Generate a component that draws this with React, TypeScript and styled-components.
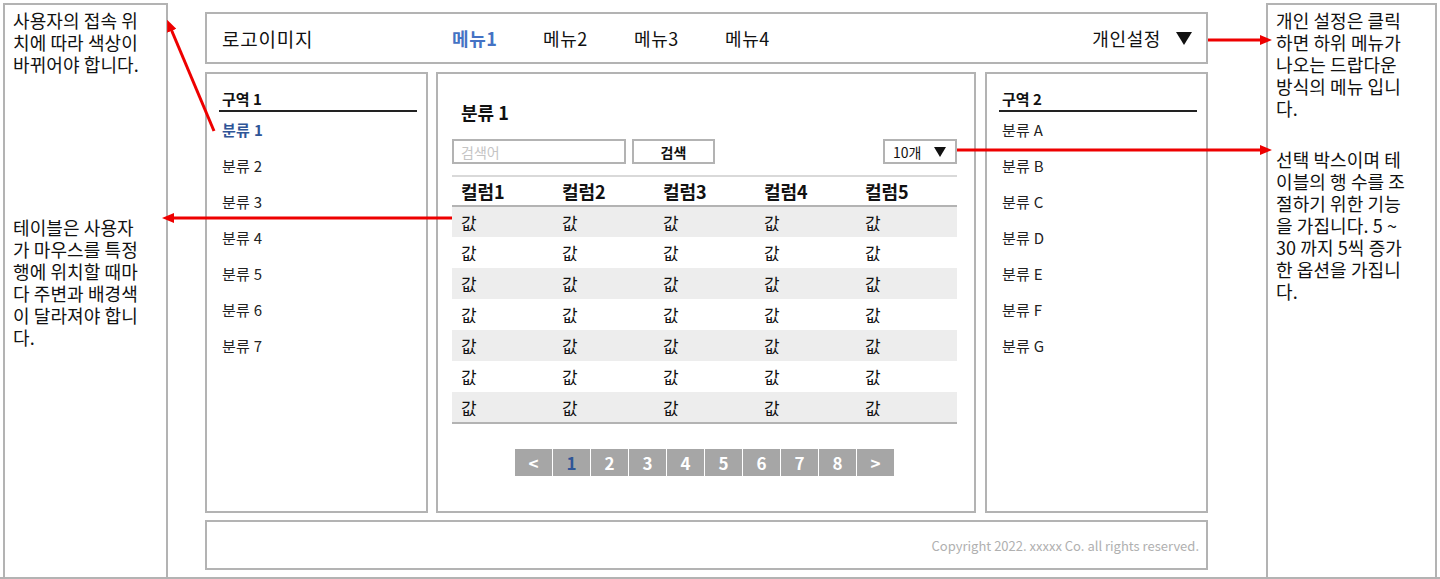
import styled, { createGlobalStyle } from "styled-components";

const GlobalStyle = createGlobalStyle`
  html, body {
    margin: 0;
    padding: 0;
    background: #ffffff;
  }
  body {
    font-family: "Noto Sans CJK KR", "Noto Sans", sans-serif;
    color: #111;
  }
  * {
    box-sizing: border-box;
  }
`;

const GRAY = "#b3b3b3";
const RED = "#ee0000";

const Canvas = styled.div`
  position: relative;
  width: 1440px;
  height: 579px;
  display: flex;
  align-items: flex-start;
  padding: 3px 3px 0 3px;
  border-bottom: 2px solid ${GRAY};
`;

const Note = styled.aside<{ $width: number }>`
  width: ${(p) => p.$width}px;
  height: 574px;
  flex-shrink: 0;
  border: 2px solid ${GRAY};
  border-bottom: none;
  padding: 4px 4px 0 8px;
  font-size: 18px;
  line-height: 22px;
  letter-spacing: 0.1px;
  white-space: pre-line;
  color: #111;
`;

const NoteText = styled.p<{ $gap?: number }>`
  margin: ${(p) => p.$gap ?? 0}px 0 0 0;
`;

const Page = styled.div`
  width: 1003px;
  margin-left: 37px;
  margin-right: 58px;
  padding-top: 9px;
  display: flex;
  flex-direction: column;
`;

const Box = styled.div`
  border: 2px solid ${GRAY};
  background: #fff;
`;

const Header = styled(Box)`
  height: 52px;
  display: flex;
  align-items: center;
  padding: 0 14px 0 15px;
  font-size: 18px;
  letter-spacing: 0.6px;
`;

const Logo = styled.div`
  width: 230px;
  font-size: 19px;
  letter-spacing: 0.8px;
`;

const NavItem = styled.a<{ $active?: boolean }>`
  width: 91px;
  color: ${(p) => (p.$active ? "#4472c4" : "#111")};
  font-weight: ${(p) => (p.$active ? 700 : 400)};
  text-decoration: none;
`;

const Settings = styled.div`
  margin-left: auto;
  display: flex;
  align-items: center;
  gap: 15px;
`;

const DownTriangle = styled.span<{ $w: number; $h: number }>`
  display: inline-block;
  width: 0;
  height: 0;
  border-left: ${(p) => p.$w / 2}px solid transparent;
  border-right: ${(p) => p.$w / 2}px solid transparent;
  border-top: ${(p) => p.$h}px solid #111;
`;

const Body = styled.div`
  display: flex;
  margin-top: 8px;
  height: 441px;
`;

const Side = styled(Box)<{ $ml?: number }>`
  width: 223px;
  margin-left: ${(p) => p.$ml ?? 0}px;
  padding: 14px 9px 0 12px;
`;

const SideTitle = styled.div`
  font-size: 15px;
  font-weight: 700;
  line-height: 22px;
  padding-left: 3px;
  border-bottom: 2px solid #222;
`;

const SideList = styled.ul`
  list-style: none;
  margin: 0;
  padding: 0;
`;

const SideItem = styled.li<{ $active?: boolean }>`
  height: 36px;
  line-height: 36px;
  padding-left: 3px;
  font-size: 15px;
  letter-spacing: 0.3px;
  color: ${(p) => (p.$active ? "#2f5597" : "#222")};
  font-weight: ${(p) => (p.$active ? 700 : 400)};
`;

const Main = styled(Box)`
  width: 540px;
  margin-left: 8px;
  padding: 26px 17px 0 14px;
  display: flex;
  flex-direction: column;
`;

const MainTitle = styled.h2`
  margin: 0 0 15px 0;
  padding-left: 9px;
  font-size: 18px;
  line-height: 24px;
  font-weight: 700;
`;

const Controls = styled.div`
  display: flex;
  align-items: center;
  gap: 6px;
  height: 25px;
`;

const SearchInput = styled.input`
  width: 174px;
  height: 25px;
  border: 2px solid ${GRAY};
  padding: 0 7px;
  font-family: inherit;
  font-size: 14px;
  outline: none;
  &::placeholder {
    color: #c4c4c4;
  }
`;

const SearchButton = styled.button`
  width: 83px;
  height: 25px;
  border: 2px solid ${GRAY};
  background: #fff;
  font-family: inherit;
  font-size: 14px;
  font-weight: 700;
  color: #111;
  padding: 0;
`;

const Select = styled.div`
  margin-left: auto;
  width: 74px;
  height: 25px;
  border: 2px solid ${GRAY};
  display: flex;
  align-items: center;
  justify-content: space-between;
  padding: 0 9px 0 8px;
  font-size: 14px;
`;

const Table = styled.table`
  margin-top: 11px;
  width: 505px;
  border-collapse: collapse;
  table-layout: fixed;
  border-top: 2px solid #d9d9d9;
  border-bottom: 2px solid ${GRAY};
`;

const Th = styled.th`
  height: 30px;
  text-align: left;
  padding: 0 0 0 9px;
  font-size: 18px;
  font-weight: 700;
  border-bottom: 2px solid ${GRAY};
`;

const Tr = styled.tr<{ $shade: boolean }>`
  background: ${(p) => (p.$shade ? "#ededed" : "#fff")};
  &:hover {
    background: #dde6f5;
  }
`;

const Td = styled.td`
  height: 31px;
  padding: 0 0 0 9px;
  font-size: 17px;
`;

const Pager = styled.div`
  margin-top: 25px;
  display: flex;
  justify-content: center;
  gap: 1px;
`;

const PageCell = styled.span<{ $active?: boolean }>`
  width: 37px;
  height: 27px;
  background: #a6a6a6;
  color: ${(p) => (p.$active ? "#2f5597" : "#fff")};
  font-weight: 700;
  font-size: 17px;
  display: flex;
  align-items: center;
  justify-content: center;
`;

const Footer = styled(Box)`
  margin-top: 7px;
  height: 50px;
  display: flex;
  align-items: center;
  justify-content: flex-end;
  padding-right: 7px;
  font-size: 13px;
  color: #b0b0b0;
`;

const Overlay = styled.svg`
  position: absolute;
  left: 0;
  top: 0;
  pointer-events: none;
`;

const leftItems = ["분류 1", "분류 2", "분류 3", "분류 4", "분류 5", "분류 6", "분류 7"];
const rightItems = ["분류 A", "분류 B", "분류 C", "분류 D", "분류 E", "분류 F", "분류 G"];
const columns = ["컬럼1", "컬럼2", "컬럼3", "컬럼4", "컬럼5"];
const pages = ["<", "1", "2", "3", "4", "5", "6", "7", "8", ">"];

const arrows = [
  { x1: 214, y1: 131, x2: 171, y2: 29 },
  { x1: 452, y1: 218, x2: 172, y2: 218 },
  { x1: 1208, y1: 40, x2: 1262, y2: 40 },
  { x1: 957, y1: 150, x2: 1262, y2: 150 },
];

const App = () => {
  return (
    <>
      <GlobalStyle />
      <Canvas>
        <Note $width={165}>
          <NoteText>{"사용자의 접속 위\n치에 따라 색상이\n바뀌어야 합니다."}</NoteText>
          <NoteText $gap={141}>
            {"테이블은 사용자\n가 마우스를 특정\n행에 위치할 때마\n다 주변과 배경색\n이 달라져야 합니\n다."}
          </NoteText>
        </Note>

        <Page>
          <Header>
            <Logo>로고이미지</Logo>
            <NavItem $active>메뉴1</NavItem>
            <NavItem>메뉴2</NavItem>
            <NavItem>메뉴3</NavItem>
            <NavItem>메뉴4</NavItem>
            <Settings>
              개인설정
              <DownTriangle $w={16} $h={13} />
            </Settings>
          </Header>

          <Body>
            <Side>
              <SideTitle>구역 1</SideTitle>
              <SideList>
                {leftItems.map((item, i) => (
                  <SideItem key={item} $active={i === 0}>
                    {item}
                  </SideItem>
                ))}
              </SideList>
            </Side>

            <Main>
              <MainTitle>분류 1</MainTitle>
              <Controls>
                <SearchInput placeholder="검색어" />
                <SearchButton>검색</SearchButton>
                <Select>
                  10개
                  <DownTriangle $w={12} $h={10} />
                </Select>
              </Controls>
              <Table>
                <thead>
                  <tr>
                    {columns.map((c) => (
                      <Th key={c}>{c}</Th>
                    ))}
                  </tr>
                </thead>
                <tbody>
                  {Array.from({ length: 7 }).map((_, r) => (
                    <Tr key={r} $shade={r % 2 === 0}>
                      {columns.map((c) => (
                        <Td key={c}>값</Td>
                      ))}
                    </Tr>
                  ))}
                </tbody>
              </Table>
              <Pager>
                {pages.map((p) => (
                  <PageCell key={p} $active={p === "1"}>
                    {p}
                  </PageCell>
                ))}
              </Pager>
            </Main>

            <Side $ml={9}>
              <SideTitle>구역 2</SideTitle>
              <SideList>
                {rightItems.map((item) => (
                  <SideItem key={item}>{item}</SideItem>
                ))}
              </SideList>
            </Side>
          </Body>

          <Footer>Copyright 2022. xxxxx Co. all rights reserved.</Footer>
        </Page>

        <Note $width={171}>
          <NoteText>{"개인 설정은 클릭\n하면 하위 메뉴가\n나오는 드랍다운\n방식의 메뉴 입니\n다."}</NoteText>
          <NoteText $gap={29}>
            {"선택 박스이며 테\n이블의 행 수를 조\n절하기 위한 기능\n을 가집니다. 5 ~\n30 까지 5씩 증가\n한 옵션을 가집니\n다."}
          </NoteText>
        </Note>

        <Overlay width={1440} height={579}>
          <defs>
            <marker
              id="head"
              markerUnits="userSpaceOnUse"
              markerWidth="12"
              markerHeight="10"
              refX="2"
              refY="5"
              orient="auto"
            >
              <path d="M0,0 L12,5 L0,10 Z" fill={RED} />
            </marker>
          </defs>
          {arrows.map((a, i) => (
            <line
              key={i}
              x1={a.x1}
              y1={a.y1}
              x2={a.x2}
              y2={a.y2}
              stroke={RED}
              strokeWidth={3}
              markerEnd="url(#head)"
            />
          ))}
        </Overlay>
      </Canvas>
    </>
  );
};

export default App;
